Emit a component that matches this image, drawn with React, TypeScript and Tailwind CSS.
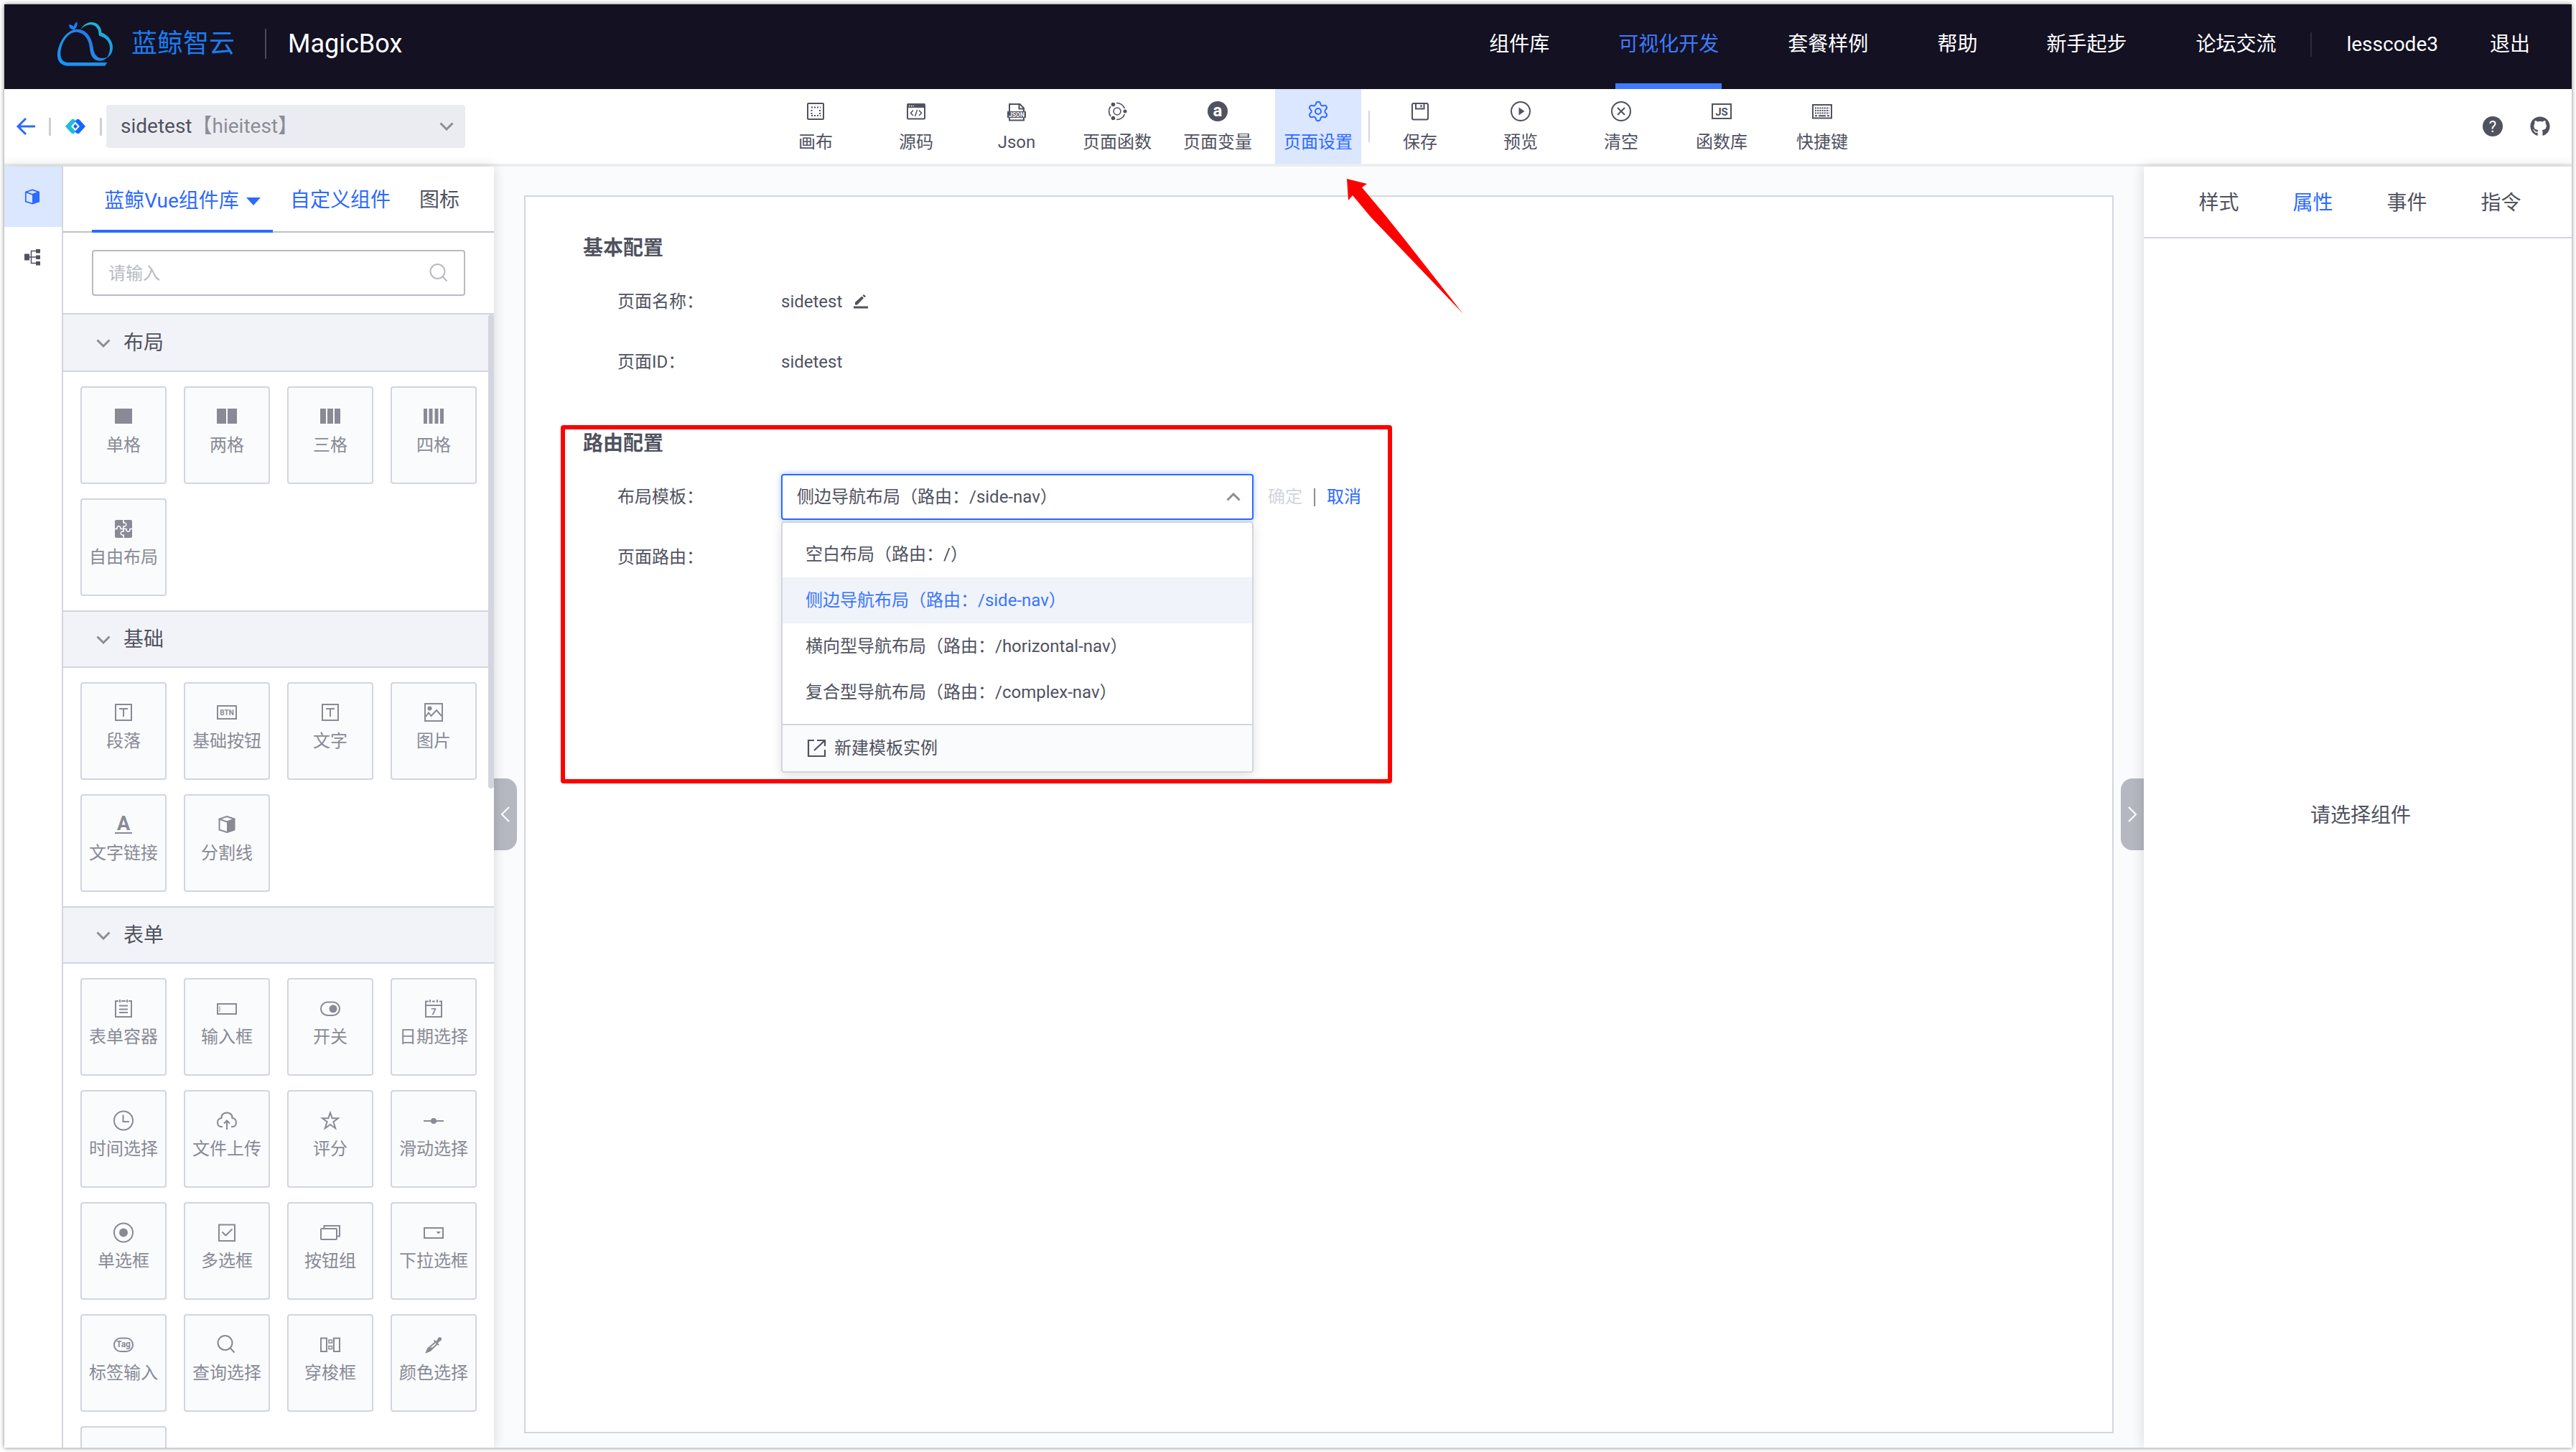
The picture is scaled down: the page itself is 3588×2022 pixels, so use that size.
import type { ReactNode } from "react";
import { Settings } from "lucide-react";
import { FaGithub } from "react-icons/fa";

type IconProps = { children: ReactNode; size?: number };

function Icon({ children, size = 32 }: IconProps) {
  return (
    <svg
      width={size}
      height={size}
      viewBox="0 0 32 32"
      fill="none"
      stroke="currentColor"
      strokeWidth={2}
      aria-hidden="true"
      className="shrink-0"
    >
      {children}
    </svg>
  );
}

type GlyphProps = { children: string; x?: number; y: number; size: number; bold?: boolean; fill?: string };

function Glyph({ children, x = 16, y, size, bold, fill = "currentColor" }: GlyphProps) {
  return (
    <text x={x} y={y} fontSize={size} fontWeight={bold ? 700 : 400} textAnchor="middle" fill={fill} stroke="none">
      {children}
    </text>
  );
}

const cube = (
  <>
    <path d="M16 5 26.5 8.5V23.5L16 27 5.500 23.5V8.500Z M5.500 8.500 16 12.500 26.500 8.500" />
    <path d="M16 12.500 27 8.500V24L16 28Z" fill="currentColor" stroke="none" />
  </>
);

const textBox = (
  <>
    <rect x="5" y="5" width="22" height="22" />
    <path d="M10 11H22M16 11V22" />
  </>
);

const icons: Record<string, ReactNode> = {
  单格: <rect x="4" y="5" width="24" height="21" fill="currentColor" stroke="none" />,
  两格: <path d="M2 5H15V26H2ZM17 5H30V26H17Z" fill="currentColor" stroke="none" />,
  三格: <path d="M2 5H10V26H2ZM12 5H20V26H12ZM22 5H30V26H22Z" fill="currentColor" stroke="none" />,
  四格: <path d="M2 5H7V26H2ZM9.500 5H14.500V26H9.500ZM17.500 5H22.500V26H17.500ZM25 5H30V26H25Z" fill="currentColor" stroke="none" />,
  自由布局: (
    <>
      <rect x="4" y="4" width="24" height="25" rx="2" fill="currentColor" stroke="none" />
      <path
        d="M16 4V8C21 7 21 14 16 13V16.500M4 16.500H7C6 11.500 13 11.500 12 16.500H20C19 21.500 26 21.500 25 16.500H28M16 16.500V20C11 19 11 26 16 25V29"
        stroke="#fafbfd"
        strokeWidth="1.600"
      />
    </>
  ),
  段落: textBox,
  文字: textBox,
  基础按钮: (
    <>
      <rect x="3" y="7" width="26" height="18" />
      <Glyph y={20} size={10} bold>BTN</Glyph>
    </>
  ),
  图片: (
    <>
      <rect x="4" y="4" width="24" height="24" />
      <circle cx="10.500" cy="10.500" r="3" fill="currentColor" stroke="none" />
      <path d="M5 22 9 16.500 12.500 21 20 13 27 21" />
    </>
  ),
  文字链接: (
    <>
      <Glyph y={24} size={27} bold>A</Glyph>
      <path d="M4 28H28" />
    </>
  ),
  分割线: cube,
  表单容器: (
    <>
      <path d="M9 6H5V28H27V6H23M13 6H19M11 4V8M21 4V8" />
      <path d="M10 12.500H22M10 17.500H22M10 22H22" />
    </>
  ),
  输入框: (
    <>
      <rect x="3" y="10" width="26" height="14" />
      <path d="M6 13V21" strokeWidth="1" />
    </>
  ),
  开关: (
    <>
      <rect x="3" y="7.500" width="26" height="18.500" rx="9.200" />
      <circle cx="20" cy="16.800" r="5.500" fill="currentColor" stroke="none" />
    </>
  ),
  日期选择: (
    <>
      <path d="M9 6.500H5V28H27V6.500H24M14 6.500H18M11 4V8M21 4V8M5 12H27" />
      <Glyph y={25} size={13} bold>7</Glyph>
    </>
  ),
  时间选择: (
    <>
      <circle cx="16" cy="16.500" r="13" />
      <path d="M15.500 8.500V18H24" />
    </>
  ),
  文件上传: (
    <>
      <path d="M10 25H8C4.500 25 3 22 3 19 3 16 5 13.500 8.500 13 8 8 12 5.500 16 5.500S24 8 23.500 13C27 13.500 29 16 29 19 29 22 27.500 25 24 25H22" />
      <path d="M16 29V17M12 20.500 16 16.500 20 20.500" />
    </>
  ),
  评分: <path d="M16 5.500 18.700 13.200H27L20.400 18.200 23.200 27.200 16 22 8.800 27.200 11.600 18.200 5 13.200H13.300Z" />,
  滑动选择: (
    <>
      <path d="M2 17H30" />
      <circle cx="16" cy="17" r="4" fill="currentColor" stroke="none" />
    </>
  ),
  单选框: (
    <>
      <circle cx="16" cy="16.500" r="13" />
      <circle cx="16" cy="16.500" r="6" fill="currentColor" stroke="none" />
    </>
  ),
  多选框: (
    <>
      <rect x="5" y="5.500" width="22" height="22.500" />
      <path d="M9.500 15.500 14.500 20.500 23.500 11.500" />
    </>
  ),
  按钮组: (
    <>
      <rect x="3" y="11" width="22" height="15" rx="1" />
      <path d="M7.500 11V7H29V21.500H25" />
    </>
  ),
  下拉选框: (
    <>
      <rect x="3" y="10" width="26" height="14" />
      <path d="M19.500 15H26L22.700 18.500Z" fill="currentColor" stroke="none" />
    </>
  ),
  标签输入: (
    <>
      <rect x="3" y="7.500" width="26" height="18.500" rx="9" />
      <Glyph y={20} size={12} bold>Tag</Glyph>
    </>
  ),
  查询选择: (
    <>
      <circle cx="13.500" cy="14" r="10" />
      <path d="M20.500 21 26.500 27.500" />
    </>
  ),
  穿梭框: (
    <>
      <rect x="3" y="7.500" width="8" height="18.500" />
      <rect x="21" y="7.500" width="8" height="18.500" />
      <rect x="14" y="10" width="4.500" height="4" strokeWidth="1.500" />
      <rect x="14" y="18.500" width="4.500" height="4" strokeWidth="1.500" />
    </>
  ),
  颜色选择: (
    <>
      <path d="M18.500 12.500 21 10C22 6 25 5 26.500 7 28 9 27 11 23.500 12.500L21.500 15" fill="currentColor" stroke="none" />
      <path d="M16.500 10.500 23 17M18.500 13 8 22 6 27 11 25 21 15.500" />
      <path d="M10 20.500H17L11 26 5.500 27.500Z" fill="currentColor" stroke="none" />
    </>
  ),
};

const tools: { label: string; icon: ReactNode }[] = [
  {
    label: "画布",
    icon: (
      <Icon>
        <rect x="5" y="5" width="22" height="22" rx="1" />
        <path d="M10 10.500H23M10 22H23" strokeDasharray="2 2" />
        <path d="M10.500 14V20M22 14V20" strokeDasharray="2 2" />
      </Icon>
    ),
  },
  {
    label: "源码",
    icon: (
      <Icon>
        <rect x="4" y="6" width="24" height="20.500" rx="1" />
        <path d="M4 5.500H28V11H4Z" fill="currentColor" stroke="none" />
        <path d="M6 8.500H13" stroke="#fff" strokeDasharray="1.500 1.500" strokeWidth="1.500" />
        <path d="M12 14.500 8.500 18.500 12 22M20 14.500 23.500 18.500 20 22M17.500 14 14.500 23" strokeWidth="1.500" />
      </Icon>
    ),
  },
  {
    label: "Json",
    icon: (
      <Icon>
        <path d="M6 16V6H20.500L26 11.500V28.500H6V16M19.500 6V12.500H26" />
        <path d="M3 16H29V25H3Z" fill="currentColor" stroke="none" />
        <Glyph y={23.500} size={8.500} bold fill="#fff">JSON</Glyph>
      </Icon>
    ),
  },
  {
    label: "页面函数",
    icon: (
      <Icon>
        <circle cx="16" cy="16" r="5" strokeWidth="1.500" />
        <path d="M15 4.500A11.500 11.500 0 0 1 26.500 12M26.500 20A11.500 11.500 0 0 1 15 27.500M7 9A11.500 11.500 0 0 0 7 23" strokeWidth="1.700" />
        <g fill="currentColor" stroke="none">
          <circle cx="10.500" cy="6.500" r="2.800" />
          <circle cx="27" cy="16" r="2.500" />
          <circle cx="10.500" cy="25.500" r="2.800" />
        </g>
      </Icon>
    ),
  },
  {
    label: "页面变量",
    icon: (
      <Icon>
        <circle cx="16" cy="16" r="14" fill="currentColor" stroke="none" />
        <Glyph y={23} size={24} bold fill="#fff">a</Glyph>
      </Icon>
    ),
  },
  { label: "页面设置", icon: <Settings size={32} strokeWidth={1.5} /> },
  {
    label: "保存",
    icon: (
      <Icon>
        <rect x="5" y="5" width="22" height="22.500" rx="2" />
        <path d="M10 5V12.500H21.500V5M17.500 7V10.500" />
      </Icon>
    ),
  },
  {
    label: "预览",
    icon: (
      <Icon>
        <circle cx="16" cy="16" r="13" />
        <path d="M13.500 10.500 21.500 16 13.500 21.500Z" fill="currentColor" stroke="none" />
      </Icon>
    ),
  },
  {
    label: "清空",
    icon: (
      <Icon>
        <circle cx="16" cy="16" r="13" />
        <path d="M11 11 21 21M21 11 11 21" />
      </Icon>
    ),
  },
  {
    label: "函数库",
    icon: (
      <Icon>
        <rect x="3" y="6" width="26" height="20" />
        <Glyph y={21.500} size={15} bold>JS</Glyph>
      </Icon>
    ),
  },
  {
    label: "快捷键",
    icon: (
      <Icon>
        <rect x="3" y="7" width="26" height="18.500" />
        <path d="M6 11.500H26M6 15H26M6 18.500H26" strokeDasharray="2 1.200" />
        <path d="M6 22.300H9M11 22.300H21M23 22.300H26" />
      </Icon>
    ),
  },
];

const groups = [
  { title: "布局", items: ["单格", "两格", "三格", "四格", "自由布局"] },
  { title: "基础", items: ["段落", "基础按钮", "文字", "图片", "文字链接", "分割线"] },
  {
    title: "表单",
    items: [
      "表单容器", "输入框", "开关", "日期选择",
      "时间选择", "文件上传", "评分", "滑动选择",
      "单选框", "多选框", "按钮组", "下拉选框",
      "标签输入", "查询选择", "穿梭框", "颜色选择",
      "",
    ],
  },
];

const options = [
  "空白布局（路由：/）",
  "侧边导航布局（路由：/side-nav）",
  "横向型导航布局（路由：/horizontal-nav）",
  "复合型导航布局（路由：/complex-nav）",
];

function Chevron({ up = false }: { up?: boolean }) {
  return (
    <svg width="20" height="12" viewBox="0 0 20 12" fill="none" stroke="#8b8d98" strokeWidth="3" aria-hidden="true">
      <path d={up ? "M1.500 10.500 10 2 18.500 10.500" : "M1.500 1.500 10 10 18.500 1.500"} />
    </svg>
  );
}

function Logo() {
  return (
    <svg width="80" height="65" viewBox="200 15 240 195" aria-hidden="true" className="shrink-0">
      <defs>
        <linearGradient id="whale" x1="0" y1="1" x2="1" y2="0.200">
          <stop offset="0" stopColor="#1193ff" />
          <stop offset="0.500" stopColor="#2193e6" />
          <stop offset="1" stopColor="#2a62ee" />
        </linearGradient>
        <linearGradient id="cloud" x1="0" y1="0" x2="1" y2="1">
          <stop offset="0" stopColor="#17c0cf" />
          <stop offset="1" stopColor="#1f98e2" />
        </linearGradient>
      </defs>
      <path
        fill="url(#cloud)"
        d="M300 50C318 20 345 17 362 24 379 32 386 48 387 64 415 75 434 100 434 125 434 147 425 160 410 170 421 152 424 135 421 118 417 98 402 84 378 78 373 68 379 58 366 42 350 25 325 28 300 50Z"
      />
      <path
        fill="url(#whale)"
        d="M411 189 402 203H245C215 203 203 180 203 160 203 110 240 50 285 50 325 50 347 85 352 125 355 152 366 171 390 171 400 171 408 168 414 165 404 177 394 182 380 182 350 182 340 155 338 128 335 90 312 62 280 62 245 62 216 110 216 155 216 177 230 189 250 189Z"
      />
      <path fill="#1d80ff" d="M251 31C262 31 268 36 272 40 272 33 277 23 285 19 288 36 281 46 272 53 258 50 252 44 251 31Z" />
    </svg>
  );
}

function Header() {
  const links = ["组件库", "可视化开发", "套餐样例", "帮助", "新手起步", "论坛交流"];
  return (
    <header className="flex h-[118px] shrink-0 bg-[#131122] pr-[58px] pl-[73px] text-[28px] text-white">
      <div className="flex items-center pb-2">
        <Logo />
        <span className="ml-6 text-[36px] leading-none text-[#1b7cf0]">蓝鲸智云</span>
        <span className="mr-[30px] ml-[42px] h-[42px] w-0.5 bg-[#4b4a58]" />
        <span className="text-[36px] leading-none">MagicBox</span>
      </div>
      <nav className="ml-auto flex gap-24">
        {links.map((link) =>
          link === "可视化开发" ? (
            <a key={link} href="#" aria-current="page" className="-mx-1 flex items-center border-b-8 border-[#3f7bff] px-1 pt-0.5 text-[#3f7bff]">
              {link}
            </a>
          ) : (
            <a key={link} href="#" className="flex items-center pb-1.5">
              {link}
            </a>
          ),
        )}
      </nav>
      <div className="flex items-center pb-1.5">
        <span className="mx-12 h-[34px] w-0.5 bg-[#2c2b3b]" />
        <a href="#">lesscode3</a>
        <a href="#" className="ml-[72px]">退出</a>
      </div>
    </header>
  );
}

function Toolbar() {
  return (
    <div className="flex h-[108px] shrink-0 items-center border-b-4 border-[#ebedef] bg-white text-[#50525f]">
      <div className="flex w-[1050px] items-center">
        <button type="button" aria-label="返回" className="ml-4 text-[#2d6aff]">
          <svg width="28" height="26" viewBox="0 0 28 26" fill="none" stroke="currentColor" strokeWidth="3" aria-hidden="true">
            <path d="M14 2 3 13 14 24M3 13H27" />
          </svg>
        </button>
        <span className="ml-[18px] h-[25px] w-[3px] bg-[#d0d0d2]" />
        <svg width="28" height="20" viewBox="0 0 28 20" className="mx-5" aria-hidden="true">
          <path d="M9 0.500H12L15 4 9.500 10 15 16 12 19.500H9L0.500 10Z" fill="#20bcd8" stroke="#20bcd8" strokeLinejoin="round" />
          <path d="M19 0.500H16L13 4 18.500 10 13 16 16 19.500H19L27.500 10Z" fill="#1768ff" stroke="#1768ff" strokeLinejoin="round" />
          <path d="M14 5 18.500 10 14 15 9.500 10Z" fill="#1768ff" stroke="#fff" strokeWidth="2" />
        </svg>
        <span className="h-[25px] w-[3px] bg-[#d0d0d2]" />
        <button type="button" aria-haspopup="listbox" className="ml-1.5 flex h-[60px] w-[500px] items-center rounded bg-[#ebecf1] px-5 text-[28px]">
          <span>sidetest</span>
          <span className="text-[#8b8d98]">【hieitest】</span>
          <span className="-mr-1 ml-auto"><Chevron /></span>
        </button>
      </div>
      <div className="ml-2.5 flex h-full items-center">
        {tools.map((tool) => (
          <div key={tool.label} className="flex h-full items-center">
            {tool.label === "保存" && <span className="h-11 w-0.5 bg-[#d3d5df]" />}
            <button
              type="button"
              className={
                tool.label === "页面设置"
                  ? "mx-2.5 flex h-full w-[120px] flex-col items-center bg-[#dbe6ff] pt-[15px] text-2xl text-[#2d6aff]"
                  : "mx-2.5 flex h-full w-[120px] flex-col items-center pt-[15px] text-2xl"
              }
            >
              {tool.icon}
              <span className="mt-[11px] leading-8">{tool.label}</span>
            </button>
          </div>
        ))}
      </div>
      <div className="mr-[30px] ml-auto flex gap-[38px]">
        <a href="#" aria-label="帮助">
          <svg width="28" height="28" viewBox="2 2 28 28" aria-hidden="true">
            <circle cx="16" cy="16" r="14" fill="currentColor" />
            <Glyph y={24} size={22} fill="#fff">?</Glyph>
          </svg>
        </a>
        <a href="#" aria-label="GitHub"><FaGithub size={28} /></a>
      </div>
    </div>
  );
}

function ComponentPanel() {
  return (
    <aside className="relative z-10 flex w-[682px] shrink-0 bg-white shadow-[0_0_16px_rgba(0,0,0,0.15)]">
      <div className="flex w-[82px] flex-col border-r-2 border-[#d3d5df]">
        <button type="button" aria-label="组件" className="flex h-[84px] items-center justify-center bg-[#dbe6ff] pr-0.5 text-[#2d6aff]">
          <Icon size={28}>{cube}</Icon>
        </button>
        <button type="button" aria-label="大纲" className="flex h-[84px] items-center justify-center pr-0.5 text-[#50525f]">
          <svg width="24" height="24" viewBox="0 0 24 24" fill="none" stroke="currentColor" strokeWidth="1.500" aria-hidden="true">
            <path d="M6 12H18M18 3.500H10.500V20.500H18" />
            <path d="M1 7.500H8V16.500H1ZM17 1H23V6.500H17ZM17 9.500H23V15H17ZM17 18H23V23.500H17Z" fill="currentColor" stroke="none" />
          </svg>
        </button>
      </div>
      <div className="flex min-w-0 flex-1 flex-col">
        <div className="flex h-[92px] shrink-0 border-b-2 border-[#c0c1c6] pl-10 text-[28px] text-[#50525f]">
          <button type="button" className="-mb-0.5 flex w-[252px] items-center justify-center gap-2.5 border-b-4 border-[#2d6aff] pt-2 text-[#2d6aff]">
            蓝鲸Vue组件库
            <svg width="20" height="11" viewBox="0 0 20 11" aria-hidden="true"><path d="M0 0H20L10 11Z" fill="currentColor" /></svg>
          </button>
          <button type="button" className="ml-6 pt-1 text-[#2d6aff]">自定义组件</button>
          <button type="button" className="ml-10 pt-1">图标</button>
        </div>
        <div className="shrink-0 border-b-2 border-[#d3d5df] px-10 py-6">
          <label className="flex h-16 items-center rounded border-2 border-[#b9bac3] pr-[18px] pl-[21px] text-[#b9bac3]">
            <input type="text" aria-label="搜索组件" placeholder="请输入" className="min-w-0 flex-1 pt-0.5 text-2xl outline-none placeholder:text-[#b9bac3]" />
            <Icon size={32}>{icons["查询选择"]}</Icon>
          </label>
        </div>
        <div className="relative min-h-0 flex-1 overflow-hidden">
          {groups.map((group, i) => (
            <section key={group.title}>
              <h2
                className={
                  i === 0
                    ? "h-20 border-b-2 border-[#d3d5df] bg-[#f2f3f8] text-[28px] text-[#50525f]"
                    : "h-20 border-y-2 border-[#d3d5df] bg-[#f2f3f8] text-[28px] text-[#50525f]"
                }
              >
                <button type="button" aria-expanded="true" className="flex h-full w-full items-center gap-[18px] pt-0.5 pl-[46px]">
                  <Chevron />
                  {group.title}
                </button>
              </h2>
              <div className="grid grid-cols-4 gap-x-6 gap-y-5 px-6 py-5">
                {group.items.map((name) => (
                  <button
                    key={name}
                    type="button"
                    aria-label={name || "更多组件"}
                    className="flex h-[136px] flex-col items-center gap-3 rounded border-2 border-[#d3d5df] bg-[#fafbfd] pt-6 text-2xl text-[#888a95]"
                  >
                    {name && <Icon>{icons[name]}</Icon>}
                    <span className="leading-6 whitespace-nowrap">{name}</span>
                  </button>
                ))}
              </div>
            </section>
          ))}
          <span className="absolute top-0 right-0 h-[660px] w-2 rounded bg-[#d3d5df]" />
        </div>
      </div>
    </aside>
  );
}

function TemplateSelect() {
  return (
    <div className="relative w-[658px]">
      <button
        type="button"
        id="template"
        aria-haspopup="listbox"
        aria-expanded="true"
        className="flex h-16 w-full items-center justify-between rounded border-2 border-[#2d6aff] bg-white pr-4 pl-5 text-2xl shadow-[0_0_8px_rgba(45,106,255,0.4)]"
      >
        侧边导航布局（路由：/side-nav）
        <Chevron up />
      </button>
      <div className="absolute top-full right-0 left-0 mt-0.5 rounded border-2 border-[#d3d5df] bg-white text-2xl shadow-[0_4px_16px_rgba(0,0,0,0.12)]">
        <ul role="listbox" aria-labelledby="template-label" className="py-3">
          {options.map((option, i) => (
            <li
              key={option}
              role="option"
              aria-selected={i === 1}
              className={
                i === 1
                  ? "flex h-16 items-center bg-[#f0f3f9] px-8 text-[#3a75ff]"
                  : "flex h-16 items-center px-8"
              }
            >
              {option}
            </li>
          ))}
        </ul>
        <button type="button" className="flex h-[66px] w-full items-center gap-2.5 border-t-2 border-[#d3d5df] bg-[#fafbfd] px-[34px]">
          <svg width="28" height="26" viewBox="0 0 28 26" fill="none" stroke="currentColor" strokeWidth="2.200" aria-hidden="true">
            <path d="M10 2H2V24H25V15M14 2H25V10M25 2 10 16" />
          </svg>
          新建模板实例
        </button>
      </div>
    </div>
  );
}

function PageSettings() {
  return (
    <div className="mx-[42px] mt-10 mb-5 flex-1 border-2 border-[#d3d5df] bg-white px-20 pt-[52px] text-2xl text-[#50525f]">
      <section>
        <h2 className="text-[28px] leading-10 font-bold">基本配置</h2>
        <div className="mt-[22px] ml-12 flex h-16 items-center">
          <span className="w-[228px]">页面名称：</span>
          <span>sidetest</span>
          <button type="button" aria-label="编辑页面名称" className="ml-4">
            <svg width="20" height="20" viewBox="0 0 20 20" aria-hidden="true">
              <path d="M0 16.500H20V19.500H0ZM2 14.500V11L11.500 2.500 14 5 5 14.500ZM12.500 1.500 14 0 17 2.500 15.200 4.200Z" fill="currentColor" />
            </svg>
          </button>
        </div>
        <div className="mt-5 ml-12 flex h-16 items-center">
          <span className="w-[228px]">页面ID：</span>
          <span>sidetest</span>
        </div>
      </section>
      <section className="relative mt-[62px]">
        <h2 className="text-[28px] leading-10 font-bold">路由配置</h2>
        <div className="mt-[22px] ml-12 flex h-16 items-center">
          <label id="template-label" htmlFor="template" className="w-[228px]">布局模板：</label>
          <TemplateSelect />
          <button type="button" disabled className="ml-5 text-[#d3d5df]">确定</button>
          <span className="mx-4 h-[25px] w-0.5 bg-[#8b8d98]" />
          <button type="button" className="text-[#2d6aff]">取消</button>
        </div>
        <div className="mt-5 ml-12 flex h-16 items-center">
          <span className="w-[228px]">页面路由：</span>
        </div>
        <div className="pointer-events-none absolute -top-1.5 -left-[31px] h-[499px] w-[1158px] rounded-sm border-6 border-[#ff0000]" />
      </section>
    </div>
  );
}

function PropertyPanel() {
  const tabs = ["样式", "属性", "事件", "指令"];
  return (
    <aside className="z-10 flex w-[596px] shrink-0 flex-col bg-white text-[28px] text-[#50525f] shadow-[0_0_16px_rgba(0,0,0,0.15)]">
      <div role="tablist" className="flex h-[100px] shrink-0 justify-center gap-[75px] border-b-2 border-[#d3d5df] pt-1 pl-1.5">
        {tabs.map((tab) => (
          <button
            key={tab}
            type="button"
            role="tab"
            aria-selected={tab === "属性"}
            className="aria-selected:text-[#2d6aff]"
          >
            {tab}
          </button>
        ))}
      </div>
      <p className="pt-[784px] pl-2 text-center leading-10">请选择组件</p>
    </aside>
  );
}

export default function App() {
  return (
    <div className="h-screen bg-white p-1.5 font-[Roboto,'Noto_Sans_CJK_SC',sans-serif]" lang="zh-CN">
      <div className="flex h-full flex-col overflow-hidden bg-[#fafbfd] shadow-[0_0_6px_rgba(0,0,0,0.5)]">
        <Header />
        <Toolbar />
        <div className="flex min-h-0 flex-1">
          <ComponentPanel />
          <main className="relative flex min-w-0 flex-1 flex-col">
            <PageSettings />
            <button
              type="button"
              aria-label="收起左侧面板"
              className="absolute top-[852px] left-0 flex h-[100px] w-8 items-center justify-center rounded-r-2xl bg-[#b5b8c0]"
            >
              <svg width="12" height="22" viewBox="0 0 12 22" fill="none" stroke="#fff" strokeWidth="2" aria-hidden="true">
                <path d="M11 1 1 11 11 21" />
              </svg>
            </button>
            <button
              type="button"
              aria-label="收起右侧面板"
              className="absolute top-[852px] right-0 flex h-[100px] w-8 items-center justify-center rounded-l-2xl bg-[#b5b8c0]"
            >
              <svg width="12" height="22" viewBox="0 0 12 22" fill="none" stroke="#fff" strokeWidth="2" aria-hidden="true">
                <path d="M1 1 11 11 1 21" />
              </svg>
            </button>
            <svg width="172" height="196" viewBox="0 0 172 196" className="pointer-events-none absolute top-3 left-[1184px]" aria-hidden="true">
              <path d="M4 5 32 12 25 17 56 54 81 85 166 193 80 103 37 58 12 28 6 35Z" fill="#ff0000" />
            </svg>
          </main>
          <PropertyPanel />
        </div>
      </div>
    </div>
  );
}
